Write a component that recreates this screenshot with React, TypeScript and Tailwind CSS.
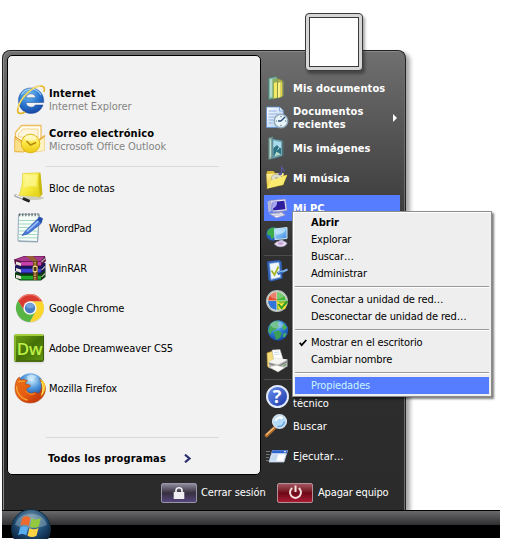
import React from "react";

type IconProps = { className?: string };

const Svg = ({ size, box, children }: { size: number; box?: string; children: React.ReactNode }) => (
  <svg width={size} height={size} viewBox={box ?? `0 0 ${size} ${size}`} className="block shrink-0 overflow-visible">
    {children}
  </svg>
);

const Gradients = () => (
  <svg width="0" height="0" className="absolute">
    <defs>
      <radialGradient id="ieBlue" cx="0.4" cy="0.25" r="0.85"><stop offset="0" stopColor="#7cc8f6" /><stop offset="0.5" stopColor="#2a78d2" /><stop offset="1" stopColor="#123a96" /></radialGradient>
      <linearGradient id="gold" x2="0" y2="1"><stop offset="0" stopColor="#fff9a6" /><stop offset="0.5" stopColor="#fbe544" /><stop offset="1" stopColor="#ecc811" /></linearGradient>
      <linearGradient id="note" x2="1" y2="1"><stop offset="0" stopColor="#fffb9a" /><stop offset="0.6" stopColor="#f5e83a" /><stop offset="1" stopColor="#dfcc10" /></linearGradient>
      <radialGradient id="sky" cx="0.55" cy="0.25" r="0.75"><stop offset="0" stopColor="#d2eefc" /><stop offset="0.45" stopColor="#4b94da" /><stop offset="1" stopColor="#12307e" /></radialGradient>
      <linearGradient id="fox" x2="1" y2="1"><stop offset="0" stopColor="#e8701a" /><stop offset="0.5" stopColor="#e65c10" /><stop offset="0.8" stopColor="#c53a0c" /><stop offset="1" stopColor="#e8860f" /></linearGradient>
      <linearGradient id="folder" x2="0" y2="1"><stop offset="0" stopColor="#fff2a0" /><stop offset="1" stopColor="#e6c530" /></linearGradient>
      <linearGradient id="screen" x2="1" y2="1"><stop offset="0" stopColor="#b5e4ff" /><stop offset="1" stopColor="#3f8be0" /></linearGradient>
      <linearGradient id="paper" x2="1" y2="1"><stop offset="0" stopColor="#ffffff" /><stop offset="1" stopColor="#a9c8ee" /></linearGradient>
      <radialGradient id="orb" cx="0.5" cy="0.25" r="0.8"><stop offset="0" stopColor="#6f93a8" /><stop offset="0.5" stopColor="#1e4a72" /><stop offset="0.85" stopColor="#0a2038" /><stop offset="1" stopColor="#2b6f98" /></radialGradient>
    </defs>
  </svg>
);

const IeIcon = () => (
  <Svg size={32}>
    <path d="M16.500 4C9.500 4 4.500 9.500 4.500 16.500S9.700 29.500 17 29.500c5.700 0 10.200-3.300 12-8.500h-7.700c-1 1.500-2.300 2.200-4.100 2.200-3 0-5-1.800-5.300-4.700h17.800C30.500 10 24.500 4 16.500 4zM12 13.800c.6-2.500 2.500-4 5-4s4.300 1.500 4.800 4z" fill="url(#ieBlue)" stroke="#1a4a9c" strokeWidth=".5" fillRule="evenodd" />
    <path d="M7.500 10.500C10 6.500 13 5.200 17 5.200c4.500 0 8 2.200 10 5.800" fill="none" stroke="#b2e0fa" strokeWidth="1.200" opacity=".8" />
    <path d="M30 8c1-3.500.5-6-3.500-6C18.500 2.300 5.500 14 3.700 25.500c-.5 4.500 3 5 7.300 2.500" fill="none" stroke="#e3b622" strokeWidth="1.700" />
    <path d="M26.500 1.800C18 3 5.700 14 3.900 24.500" fill="none" stroke="#fff4a8" strokeWidth=".9" />
  </Svg>
);

const OutlookIcon = () => (
  <Svg size={32}>
    <path d="M1.500 8.500L7.500 1.500H27V15L23 27l-21.500.5z" fill="#fffdf2" stroke="#eebf5c" strokeWidth="1.300" />
    <path d="M4.500 10l4.500-5h15v8H4.500z" fill="#fdf6dc" stroke="#f4d690" />
    <path d="M.7 14.500L10 20v8L.7 27.500z" fill="#fbe08c" stroke="#e9ae3a" strokeWidth=".8" />
    <path d="M22 19l8.500-6v13.500L22 28z" fill="#fff3c2" stroke="#efcb79" strokeWidth=".7" />
    <circle cx="16.500" cy="19.500" r="9.300" fill="url(#gold)" stroke="#dcb617" />
    <ellipse cx="16.500" cy="14" rx="6" ry="3" fill="#fff" opacity=".45" />
    <path d="M12.500 17l4 4 5.500-2.500" fill="none" stroke="#b58a08" strokeWidth="1.600" />
    <path d="M.7 12.500l7.500 5M31 11.500L25 16" stroke="#e6a629" strokeWidth="1.500" />
  </Svg>
);

const NotesIcon = () => (
  <Svg size={32}>
    <ellipse cx="18" cy="26" rx="12" ry="2" fill="#cfcfbb" />
    <path d="M11 1.500l15.500-.8 2 21.500-3.500 3.500z" fill="#c9b80c" />
    <path d="M8.500 1.500L25 .8c-.8 8-.3 17.200 1 23.700L5 23.500C7.500 17 9 9 8.500 1.500z" fill="url(#note)" stroke="#ddd02c" strokeWidth=".6" />
    <path d="M10.500 3.500l13-.8c-1 6-1 9-.5 12-5-1-9-1-13 1 .8-4 .8-8 .5-12z" fill="#fffcae" opacity=".55" />
    <path d="M1.500 23.500l13.500 5.500" stroke="#9a9a9a" strokeWidth="2.600" strokeLinecap="round" />
    <path d="M1.500 23l7 2.900" stroke="#fafafa" strokeWidth="1.200" />
    <path d="M9 26.500l6.500 2.800" stroke="#222" strokeWidth="2.800" />
  </Svg>
);

const WordPadIcon = () => (
  <Svg size={32}>
    <path d="M5.500 3L26 2.500 24 30.500 4.500 30z" fill="#a7b8c4" />
    <path d="M4.500 2.500l20.500-.5-1.500 27.500L4 28.800z" fill="#f5fdf9" stroke="#7d97a8" strokeWidth=".8" />
    <path d="M5 8.500h18.500M5 12h18.500M5 15.500h18M5 19h18M4.500 22.500h18.500M4.500 25.800h18.500" stroke="#9bd4bd" strokeWidth=".9" />
    <path d="M5 2.800h19.500" stroke="#69736c" strokeWidth="3" strokeDasharray="1.300 1.800" />
    <path d="M25.500 5l3 1.500-1.500 5L14.500 21.500l-6.500 2 3.500-4.500z" fill="#4a78dc" stroke="#2b51ad" strokeWidth=".7" />
    <path d="M25 8.500L13 19.500" stroke="#a5cdfa" strokeWidth="1.400" />
    <path d="M25 5l3.500 1.500-1 4.500-4-2.500z" fill="#274faa" />
  </Svg>
);

const WinRarIcon = () => (
  <Svg size={32}>
    <path d="M1 20.500L9 18h22.500v7L27 28.500H6L1 26z" fill="#0a3d0e" />
    <path d="M1 13.500L9 11h22.500v7L27 21.500H6L1 19z" fill="#1a165c" />
    <path d="M0 7.500L10 4h21l1 5-5 5H6L1 12.500z" fill="#571345" />
    <path d="M1.500 7.500L10 4.500h20.500L27 9H6.500z" fill="#a8398e" />
    <path d="M2 9.500l5 1.500v3l-5-1.500zM2 16l5 1.500v3.300L2 19zM2 22.700L7 24v3.300L2 26z" fill="#e8e3da" />
    <path d="M7 9.800h20v3.700H7z" fill="#c83fae" />
    <path d="M7 16.800h20v3.700H7z" fill="#3d3fd6" />
    <path d="M7 23.800h20v3.700H7z" fill="#20a82b" />
    <path d="M27.500 10l4-3.700M27.500 18l4-3.700M27.500 25l4-3.700" stroke="#b9b2a8" strokeWidth="1.200" />
    <path d="M12 4h7l5 5v19h-5V9.500z" fill="#704522" />
    <path d="M12 4h7l4.500 5H18z" fill="#966036" />
    <path d="M21 10v18" stroke="#e9d06a" strokeWidth="1.300" strokeDasharray="1.500 1" />
    <path d="M19.200 14.500h3.800v5h-3.800z" fill="#4b3515" stroke="#f0db86" />
  </Svg>
);

const ChromeIcon = () => (
  <Svg size={32}>
    <circle cx="16" cy="16.800" r="14" fill="#b9b9b9" opacity=".5" />
    <path d="M16 9.500h12.400A14 14 0 0 0 4 8.800l6.400 10.500z" fill="#db3a30" />
    <path d="M21.600 19.300L15.800 30A14 14 0 0 0 28.400 9.500H16z" fill="#fbd62c" />
    <path d="M10.400 19.300L4 8.800A14 14 0 0 0 15.800 30l5.800-10.700z" fill="#56b544" />
    <path d="M5.500 8a13 13 0 0 1 21 0" fill="none" stroke="#ee7d72" strokeWidth="1.300" />
    <circle cx="16" cy="16" r="6.700" fill="#f4f4f4" />
    <circle cx="16" cy="16" r="5.200" fill="#4a7fc6" />
    <ellipse cx="16" cy="13.800" rx="4" ry="2.500" fill="#8ab2e6" opacity=".7" />
  </Svg>
);

const DwIcon = () => (
  <div className="relative ml-[-2px] flex h-[28px] w-[30px] shrink-0 items-center justify-center overflow-hidden rounded-[2px] border-y-2 border-r border-l-2 border-t-[#a4cf3c] border-r-[#3c5c10] border-b-[#4a6b12] border-l-[#86b62c] bg-gradient-to-br from-[#6da012] via-[#447007] to-[#5f9410] font-['Open_Sans',sans-serif] text-[17px] font-semibold leading-none tracking-[-0.5px] text-[#bdf046] shadow-sm">
    Dw
  </div>
);

const FirefoxIcon = () => (
  <Svg size={32}>
    <circle cx="16.500" cy="14.500" r="13.300" fill="url(#sky)" />
    <path d="M13 4.500c3-2.500 7-2 9.500.5-2 .5-3.500 1.500-4.500 3.500l-4 .5z" fill="#d7effb" opacity=".6" />
    <path d="M3 7.500C4 6 4.800 5.300 5.500 5c0 1.500.6 2.500 1.500 3 2-.7 4.500-.5 6.500.7-1.800 1-2.300 2.300-2 3.500 2 0 4 .3 5 1.500-.8 1.800-3.500 2-4.300 3.500.3 3.500 4.300 5 7.300 3.500 2.500-1 4.500-.2 4 1.500 3.500-2 4.500-6 4-10-.3-2-1-4-2-5.500C29.500 9.500 31.500 13 31.500 17c-.5 8-7 14-15.300 14C7.500 31 1 25 1 16.500c0-3.500.5-6.500 2-9z" fill="url(#fox)" stroke="#a83a0a" strokeWidth=".5" />
    <path d="M25.500 6.700c4 4.500 4.800 12 .5 18.300 4.500-3 6.300-9 4.700-13.500-.9-2.300-2.700-4-5.200-4.800z" fill="#fcc82a" />
    <path d="M27.500 10c2 4 1.800 9 .2 12.500" fill="none" stroke="#fff27a" strokeWidth="1" />
    <path d="M2.500 14c0 7 4.500 12.500 11 14M4 10c2-1 4.500-1 7-.7" fill="none" stroke="#f7a333" strokeWidth="1.300" />
    <path d="M12 18.500c1.500 3.500 5 4.500 9 3" fill="none" stroke="#f9a534" strokeWidth="1" />
  </Svg>
);

const DocsIcon = () => (
  <Svg size={24}>
    <path d="M3.500 2L12 .5V22l-8.500 1.500z" fill="#7fb6a8" stroke="#47756c" strokeWidth=".6" />
    <path d="M5 3.500l2.500-.8v18L5 21.500z" fill="#b5dccb" />
    <path d="M7.500 3.500l5-1.500v20l-5 1z" fill="#8cae5e" />
    <path d="M9 7l3-1v15.500l-3 .8z" fill="#f4ea62" />
    <path d="M12.500 2.500l5 2v16.300l-5 1.500z" fill="#adae4e" stroke="#7e8a3f" strokeWidth=".4" />
    <path d="M13 7l2.500-1v15l-2.500.7z" fill="#fdf385" />
    <path d="M16 6.500l1.500-.3v13.500l-1.500.5z" fill="#e8d64b" />
    <path d="M17.500 4.500l1.300.8v14.500l-1.300.8z" fill="#799065" />
  </Svg>
);

const RecentIcon = () => (
  <Svg size={24}>
    <path d="M1.500 1h13l4 4v16.500h-17z" fill="url(#paper)" stroke="#5e8fd0" strokeWidth=".8" />
    <path d="M14.500 1v4h4" fill="#dcebfa" stroke="#5e8fd0" strokeWidth=".7" />
    <path d="M3.500 5h8M3.500 8h10M3.500 11h6M3.500 14h5M3.500 17h4" stroke="#8fb2e8" />
    <circle cx="16" cy="15" r="6.800" fill="#e8f3fa" stroke="#8da4b5" strokeWidth="1.300" />
    <path d="M16 15l4-4M16 15h-3" stroke="#274d73" strokeWidth="1.400" />
    <path d="M16 9.800v1.400M16 18.800v1.400M10.800 15h1M20 15h1.300" stroke="#42627c" />
  </Svg>
);

const PicturesIcon = () => (
  <Svg size={24}>
    <path d="M3.500 2L8 .8v22l-4.500.7z" fill="#8db2a8" stroke="#4b6d69" strokeWidth=".5" />
    <path d="M5 4l1.500-.4v17L5 21z" fill="#bedcd0" />
    <path d="M7 2.500l10.500 2v15.500L7 23z" fill="#76a9b4" stroke="#41616d" strokeWidth=".7" />
    <path d="M8.500 4.500l7.500 1.700V12l-7.500.5z" fill="#a9dbee" />
    <path d="M8.500 12l3.500-3 4 3.500v6.300l-7.500 2z" fill="#2c7284" />
    <path d="M9 20.500l2.500-5 4.500 3" fill="#b5dccb" />
    <path d="M13 9l1.500 2-2 3" stroke="#d8f1f4" strokeWidth=".8" fill="none" />
    <path d="M17.500 4.500l1.300.8v14l-1.300.7z" fill="#4f6d70" />
  </Svg>
);

const MusicIcon = () => (
  <Svg size={24}>
    <path d="M1.500 7l1-2h6l2 2.500h8V19L2 22z" fill="#d9bb38" />
    <path d="M1.500 8l17-1v11L2 21.500z" fill="url(#folder)" />
    <path d="M6 14L22 9l-4 9.500L2 22.500z" fill="#f7e561" stroke="#c9a926" strokeWidth=".6" />
    <ellipse cx="11.500" cy="12" rx="5.200" ry="3.800" fill="#dcdcc9" stroke="#a9a282" strokeWidth=".6" />
    <circle cx="11.500" cy="12" r="1.100" fill="#998" />
    <path d="M5 14.800L22 9l-4 9.500L2 22.500z" fill="#f9ea70" />
    <path d="M16.500 0v8M16.500 1c1 2 3 2 2.500 4.500" stroke="#56579f" strokeWidth="1.200" fill="none" />
    <ellipse cx="15.200" cy="8" rx="1.800" ry="1.200" fill="#5559a5" />
  </Svg>
);

const PcIcon = () => (
  <Svg size={24}>
    <path d="M2.500 5.500l4-1.500v11l-3 1.500z" fill="#b9b7d8" />
    <path d="M5.500 4.500L20.500 3l1.500 11.500-14 1.500z" fill="#e9e8f7" stroke="#8a88b8" strokeWidth=".6" />
    <path d="M7 6l12.300-1.300 1.200 8.500L8.300 14.500z" fill="#2c1e9e" />
    <path d="M7 6l5-.5c.5 3.500-1 5.500-4 7z" fill="#a5a4ee" />
    <path d="M12.500 15.500h5l1 2.500h-6z" fill="#a09dc4" />
    <path d="M4 17.500l12-1 4.500 2.500-9 3z" fill="#f0f0fa" stroke="#8d8cb0" strokeWidth=".7" />
    <path d="M6 18l9-.7M8 19.500l9-.7" stroke="#a3a3c8" strokeWidth=".7" />
  </Svg>
);

const NetworkIcon = () => (
  <Svg size={24}>
    <circle cx="8" cy="9" r="6.800" fill="#2460bd" />
    <path d="M2.500 6c3-4 8-4.500 9.500-1.500l-3 3 1 3-3 4-2-4-3-1z" fill="#3cab4b" />
    <path d="M9.500 4L22 2.500v11L10 14.500z" fill="url(#screen)" stroke="#cce8ff" />
    <path d="M10.500 5L21 3.700c-1 4-5 5.800-10 5.800z" fill="#d7f3ff" opacity=".6" />
    <path d="M14.500 15l3.500-.5 1 3h-5z" fill="#a9b6cc" />
    <path d="M9.500 19c2-3.500 10-4 12.500-.5-2 3.700-9.500 4.700-12.500.5z" fill="#e6def2" stroke="#b5a8cd" strokeWidth=".7" />
    <ellipse cx="15.500" cy="18.500" rx="2.800" ry="1.200" fill="#c49ad2" />
  </Svg>
);

const ControlPanelIcon = () => (
  <Svg size={24}>
    <path d="M2 2.500L14 1l2.500 1.500 1 17L6 22.500 3.500 21z" fill="#2f62b8" />
    <path d="M4.500 4.500L14 3.300l1.500 15L6 20.500z" fill="#f1f8fc" stroke="#83abe1" strokeWidth=".7" />
    <path d="M6.500 11.500l3 4.500 4-8.500" fill="none" stroke="#a6b424" strokeWidth="1.800" />
    <path d="M12.500 14.500l6-2" stroke="#2f69bd" strokeWidth="3" />
    <path d="M18 12.500l4.500-2" stroke="#78b1ee" strokeWidth="2" />
    <path d="M13 13.500l5-1.600" stroke="#b8dafa" strokeWidth=".8" />
  </Svg>
);

const DefaultsIcon = () => (
  <Svg size={24}>
    <circle cx="12" cy="12" r="10.300" fill="#e9efe9" stroke="#b5bfbb" strokeWidth="1.400" />
    <path d="M11.500 11.500V3A9 9 0 0 0 3 11.500z" fill="#e04b2e" />
    <path d="M12 11.500V3a9 9 0 0 1 9 8.500z" fill="#43b538" />
    <path d="M11.500 12v9A9 9 0 0 1 3 12z" fill="#3275d9" />
    <path d="M12 12h9a9 9 0 0 1-9 9z" fill="#8ac23a" />
    <path d="M11.500 11.500l4 3 6.500-1-2 6.500h-6.500z" fill="#ffec3c" stroke="#cfb615" strokeWidth=".5" />
    <path d="M13.500 15l3 4 6-7" fill="none" stroke="#2f9d27" strokeWidth="2" />
    <ellipse cx="12" cy="6.500" rx="7" ry="3.500" fill="#fff" opacity=".3" />
  </Svg>
);

const GlobeIcon = () => (
  <Svg size={24}>
    <circle cx="13" cy="11.500" r="10.200" fill="url(#ieBlue)" />
    <path d="M5 6c3-4 7-4.500 9-3.500l-1 3 1.500 2-4 3.500-3.500 1-1.500 3.500-2.500-3z" fill="#45a85a" />
    <path d="M8.500 13l5-1.500 3.500 2.500-2 5-4 2-1-4z" fill="#3d9f55" />
    <path d="M18.500 4l3.500 4.500-3 3-2-3z" fill="#4db15a" />
    <path d="M19 14l3 .5-2.500 4-2-1z" fill="#49aa67" />
    <ellipse cx="12" cy="6" rx="6.500" ry="3.500" fill="#d3f4ff" opacity=".35" />
  </Svg>
);

const PrinterIcon = () => (
  <Svg size={24}>
    <path d="M2 4l6-2 2 14-6 3-1.500-2z" fill="#f5dc7c" stroke="#c99f38" strokeWidth=".6" />
    <path d="M7 1l8-.5 3 9.500-9 2z" fill="#fff" stroke="#aaa" strokeWidth=".5" />
    <path d="M9 3.500l5-.5M9.500 5.500l5-.5" stroke="#b6cfdf" strokeWidth=".8" />
    <path d="M3.500 13L11 9l11.500 1.500v7L13 22.500 4.500 19z" fill="#b9bab9" />
    <path d="M3.500 13L11 9l11.500 1.500L13 15.500z" fill="#f4f4f0" />
    <path d="M4 14.500l9 3 9.500-5" stroke="#777" strokeWidth="1.100" fill="none" />
    <path d="M4 18l7-2 9 2.500-7 4.500z" fill="#fbfbf5" stroke="#aaa" strokeWidth=".6" />
    <path d="M18.500 16.500l2.500-1" stroke="#52a34a" strokeWidth="1.300" />
  </Svg>
);

const HelpIcon = () => (
  <div className="flex size-[23px] shrink-0 items-center justify-center rounded-full border-2 border-[#e3eafc] bg-gradient-to-br from-[#6c8ff0] to-[#1c36a8] font-['Open_Sans',sans-serif] text-[18px] font-bold leading-none text-white">
    ?
  </div>
);

const SearchIcon = () => (
  <Svg size={24}>
    <path d="M1.500 21.500l7.500-7" stroke="#b36d2a" strokeWidth="3.600" strokeLinecap="round" />
    <path d="M1.500 20.500l7-6.500" stroke="#f0bb78" strokeWidth="1.500" strokeLinecap="round" />
    <circle cx="14.500" cy="7.500" r="6.800" fill="#b4dcfa" stroke="#d3dfe8" strokeWidth="1.600" />
    <path d="M10.500 7c1-3.500 4.500-4.500 7-2.500" fill="none" stroke="#fff" strokeWidth="2.200" />
    <path d="M12.500 12.500c4 .5 6.500-2 7-5" fill="none" stroke="#6aaae6" strokeWidth="1.600" />
  </Svg>
);

const RunIcon = () => (
  <Svg size={24}>
    <path d="M1 7.500h4M1 10.500h3.500M1 13.500h3M1 16.500h2.500" stroke="#71777d" strokeWidth="1.200" />
    <path d="M7.500 6.500H22.500L19 18H4z" fill="#dfeafa" stroke="#c0d0e6" strokeWidth=".8" />
    <path d="M7.500 6.300h15l-.9 3H6.500z" fill="#2e65cf" />
    <path d="M7.500 10.500h5.500l-2 6.300H5.500z" fill="#c5d8f0" />
    <path d="M13.500 10.500h6.500l-1.800 6.300H11.500z" fill="#fff" />
    <path d="M19 7.700h2" stroke="#fff" />
  </Svg>
);

const LockIcon = () => (
  <svg width="12" height="14" viewBox="0 0 12 14">
    <path d="M3 7V4.500C3 .8 9 .8 9 4.500V7" fill="none" stroke="#efeff2" strokeWidth="1.700" />
    <path d="M.7 6h10.600v7H.7z" fill="#efeff2" />
  </svg>
);

const PowerIcon = () => (
  <svg width="15" height="15" viewBox="0 0 15 15" fill="none" stroke="#f5dfdf" strokeWidth="2">
    <path d="M4.200 3A5.500 5.500 0 1 0 10.800 3M7.500 .5v6.500" />
  </svg>
);

const StartOrb = () => (
  <svg width="40" height="40" viewBox="0 0 40 40">
    <circle cx="20" cy="20" r="19.500" fill="url(#orb)" stroke="#122c3c" />
    <path d="M4 16C7 1 33 1 36 16c-8 4-24 4-32 0z" fill="#d5e5ec" opacity=".3" />
    <path d="M11.500 8.500c3-2 5.500-1.500 8 .3l-2 8.200c-2.500-1.800-5-2-8-.4z" fill="#ef6a2c" />
    <path d="M20.800 9.300c3 1.800 6 1.700 9-.2l-2 8.300c-3 1.700-6 1.800-9 .1z" fill="#93c93e" />
    <path d="M9.200 18.300c3-1.600 5.500-1.400 8 .4l-2 7.800c-2.500-1.700-5-1.900-8-.3z" fill="#5aaef0" />
    <path d="M18.500 19c3 1.700 6 1.600 9-.1l-2 7.900c-3 1.700-6 1.700-9 0z" fill="#fdd243" />
  </svg>
);

type App = { title: string; subtitle?: string; Icon: React.FC<IconProps> };

const pinned: App[] = [
  { title: "Internet", subtitle: "Internet Explorer", Icon: IeIcon },
  { title: "Correo electrónico", subtitle: "Microsoft Office Outlook", Icon: OutlookIcon },
];

const recent: App[] = [
  { title: "Bloc de notas", Icon: NotesIcon },
  { title: "WordPad", Icon: WordPadIcon },
  { title: "WinRAR", Icon: WinRarIcon },
  { title: "Google Chrome", Icon: ChromeIcon },
  { title: "Adobe Dreamweaver CS5", Icon: DwIcon },
  { title: "Mozilla Firefox", Icon: FirefoxIcon },
];

const ProgramRow = ({ title, subtitle, Icon }: App) => (
  <div className="flex h-10 items-center gap-[3px]">
    <div className="flex w-8 shrink-0 justify-center"><Icon /></div>
    <div className="leading-[13px] text-black">
      <div className={subtitle ? "font-bold tracking-[0.12px]" : "tracking-[-0.12px]"}>{title}</div>
      {subtitle && <div className="tracking-[-0.07px] text-[#858585]">{subtitle}</div>}
    </div>
  </div>
);

const Place = ({ Icon, label, bold, selected, arrow }: { Icon: React.FC<IconProps>; label?: React.ReactNode; bold?: boolean; selected?: boolean; arrow?: boolean }) => (
  <div className="flex h-[30px] items-center">
    <div className={`flex h-[26px] w-full items-center pl-px ${selected ? "bg-[#567cff]" : ""}`}>
      <div className="flex w-6 shrink-0 justify-center"><Icon /></div>
      {label && <div className={`ml-1 flex-1 leading-[13px] ${bold ? "font-bold tracking-[0.1px]" : ""}`}>{label}</div>}
      {arrow && <div className="mr-[3px] h-0 w-0 border-y-[4px] border-l-[4px] border-y-transparent border-l-white" />}
    </div>
  </div>
);

const MenuItem = ({ label, bold, checked, selected }: { label: string; bold?: boolean; checked?: boolean; selected?: boolean }) => (
  <div className={`flex h-[17px] items-center leading-[13px] ${selected ? "bg-[#567cff] text-[#c9f4ff]" : ""}`}>
    <div className="flex w-4 shrink-0 justify-center">
      {checked && (
        <svg width="8" height="8" viewBox="0 0 8 8" fill="none" stroke="#000" strokeWidth="1.800"><path d="M.7 3.700l2 2.500L7.300 1" /></svg>
      )}
    </div>
    <span className={bold ? "font-bold" : "tracking-[-0.14px]"}>{label}</span>
  </div>
);

const MenuDivider = () => (
  <div className="flex h-[9px] items-center"><div className="h-[2px] w-full border-t border-[#9a9a98] bg-white" /></div>
);

export default function App() {
  return (
    <div className="relative h-[540px] w-[506px] overflow-hidden whitespace-nowrap bg-white font-['DejaVu_Sans_Condensed','DejaVu_Sans',sans-serif] text-[11px] text-black">
      <Gradients />
      <div className="ml-[2px] flex h-[538px] w-[498px] flex-col pt-[50px]">
        <div className="flex h-[460px] w-[404px] flex-col rounded-t-[8px] border border-b-0 border-[#222] bg-gradient-to-b from-[#707070] via-[#2f2f2f] via-45% to-[#2b2b2b] shadow-[inset_1px_1px_0_#8a8a8a,inset_-1px_0_0_#6c6c6c,4px_3px_4px_rgba(0,0,0,0.35)]">
          <div className="flex h-[424px] pl-1 pt-1">
            <div className="flex h-[420px] w-[254px] flex-col rounded-[5px] border border-black bg-[#f2f2f2] pl-[6px] pt-6">
              {pinned.map((p) => <ProgramRow key={p.title} {...p} />)}
              <div className="ml-8 mt-[6px] h-px w-[173px] bg-[#dadada]" />
              <div className="mt-px">
                {recent.map((p) => <ProgramRow key={p.title} {...p} />)}
              </div>
              <div className="ml-8 mt-[29px] h-px w-[173px] bg-[#dadada]" />
              <div className="ml-[34px] mt-[11px] flex h-5 items-center font-bold tracking-[0.15px]">
                <span className="w-[135px]">Todos los programas</span>
                <svg width="9" height="9" viewBox="0 0 9 9" fill="none" stroke="#2c2f70" strokeWidth="2.200" className="-mt-0.5"><path d="M2 .7l4.500 3.800L2 8.300" /></svg>
              </div>
            </div>
            <div className="ml-[3px] w-[136px] pt-[18px] text-white">
              <Place Icon={DocsIcon} label="Mis documentos" bold />
              <Place Icon={RecentIcon} label={<>Documentos<br />recientes</>} bold arrow />
              <Place Icon={PicturesIcon} label="Mis imágenes" bold />
              <Place Icon={MusicIcon} label="Mi música" bold />
              <Place Icon={PcIcon} label="Mi PC" bold selected />
              <div className="-mt-px"><Place Icon={NetworkIcon} /></div>
              <div className="mt-[3px] h-px bg-[#4c4c4c]" />
              <Place Icon={ControlPanelIcon} />
              <Place Icon={DefaultsIcon} />
              <Place Icon={GlobeIcon} />
              <Place Icon={PrinterIcon} />
              <div className="mb-px mt-[3px] h-px bg-[#4c4c4c]" />
              <Place Icon={HelpIcon} label={<div className="pt-[14px]">técnico</div>} />
              <Place Icon={SearchIcon} label="Buscar" />
              <Place Icon={RunIcon} label="Ejecutar…" />
            </div>
          </div>
          <div className="flex flex-1 items-center pl-[158px]">
            <div className="flex h-5 w-9 items-center justify-center rounded-[2px] border border-[#9994a8] bg-gradient-to-b from-[#8f8b9c] via-[#37303f] to-[#55457c]"><LockIcon /></div>
            <span className="ml-1 w-[76px] pt-px tracking-[-0.08px] text-white">Cerrar sesión</span>
            <div className="flex h-5 w-9 items-center justify-center rounded-[2px] border border-[#b48f95] bg-gradient-to-b from-[#a25460] via-[#6e0718] to-[#a91c32]"><PowerIcon /></div>
            <span className="ml-[5px] pt-px tracking-[-0.15px] text-white">Apagar equipo</span>
          </div>
        </div>
        <div className="h-[28px] w-[498px] border-t border-black bg-black"><div className="h-[14px] bg-gradient-to-b from-[#6a6a6c] to-[#303032]" /></div>
      </div>

      <div className="absolute left-[305px] top-[13px] size-[58px] rounded-[4px] border-[1.500px] border-[#3a3a3a] bg-[#d6d6d6] p-[3px] shadow-[2px_3px_3px_rgba(0,0,0,0.35)]">
        <div className="h-full w-full border border-[#3a3a3a] bg-white" />
      </div>

      <div className="absolute left-[11px] top-[509px] h-[30px] w-10 overflow-hidden"><StartOrb /></div>

      <div className="absolute left-[292px] top-[211px] h-[186px] w-[200px] border border-[#8b8b88] bg-[#eee] p-[2px] shadow-[inset_1px_1px_0_#fff,2px_2px_2px_rgba(0,0,0,0.5)]">
        <MenuItem label="Abrir" bold />
        <MenuItem label="Explorar" />
        <MenuItem label="Buscar…" />
        <MenuItem label="Administrar" />
        <MenuDivider />
        <MenuItem label="Conectar a unidad de red…" />
        <MenuItem label="Desconectar de unidad de red…" />
        <MenuDivider />
        <MenuItem label="Mostrar en el escritorio" checked />
        <MenuItem label="Cambiar nombre" />
        <MenuDivider />
        <MenuItem label="Propiedades" selected />
      </div>
    </div>
  );
}
